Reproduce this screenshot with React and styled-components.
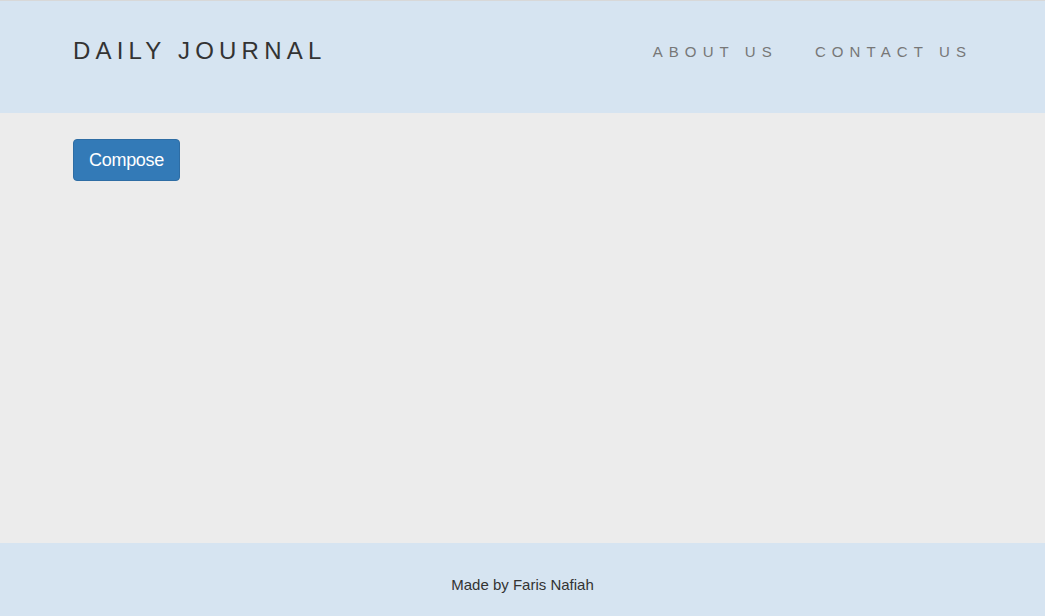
import React from "react";
import styled, { createGlobalStyle } from "styled-components";

const GlobalStyle = createGlobalStyle`
  html, body {
    margin: 0;
    padding: 0;
    height: 100%;
  }
  body {
    font-family: "Liberation Sans", Arial, sans-serif;
    background: #ececec;
    color: #333;
  }
`;

const Page = styled.div`
  min-height: 616px;
  display: flex;
  flex-direction: column;
`;

const Header = styled.header`
  height: 113px;
  background: #d6e4f1;
  border-top: 1px solid #d8d8d8;
  box-sizing: border-box;
  display: flex;
  align-items: center;
  justify-content: space-between;
  padding: 0 55px 0 73px;
`;

const Brand = styled.div`
  font-size: 24px;
  letter-spacing: 5.2px;
  color: #333;
  margin-top: -12px;
`;

const Nav = styled.nav`
  display: flex;
  margin-top: -12px;
`;

const NavLink = styled.a`
  font-size: 15px;
  letter-spacing: 6.1px;
  color: #777;
  padding: 0 18px 0 19px;
  text-decoration: none;
`;

const Main = styled.main`
  flex: 1;
  padding: 26px 73px;
`;

const Button = styled.button`
  background: #337ab7;
  border: 1px solid #2e6da4;
  border-radius: 4px;
  color: #fff;
  font-family: "Liberation Sans", Arial, sans-serif;
  font-size: 18px;
  letter-spacing: -0.3px;
  padding: 9px 15px;
  height: 42px;
  width: 107px;
  cursor: pointer;
`;

const Footer = styled.footer`
  height: 73px;
  background: #d6e4f1;
  display: flex;
  align-items: center;
  justify-content: center;
  font-size: 15px;
  color: #333;
  padding-top: 10px;
  box-sizing: border-box;
`;

export default function App() {
  return (
    <>
      <GlobalStyle />
      <Page>
        <Header>
          <Brand>DAILY JOURNAL</Brand>
          <Nav>
            <NavLink href="#">ABOUT US</NavLink>
            <NavLink href="#">CONTACT US</NavLink>
          </Nav>
        </Header>
        <Main>
          <Button>Compose</Button>
        </Main>
        <Footer>Made by Faris Nafiah</Footer>
      </Page>
    </>
  );
}
